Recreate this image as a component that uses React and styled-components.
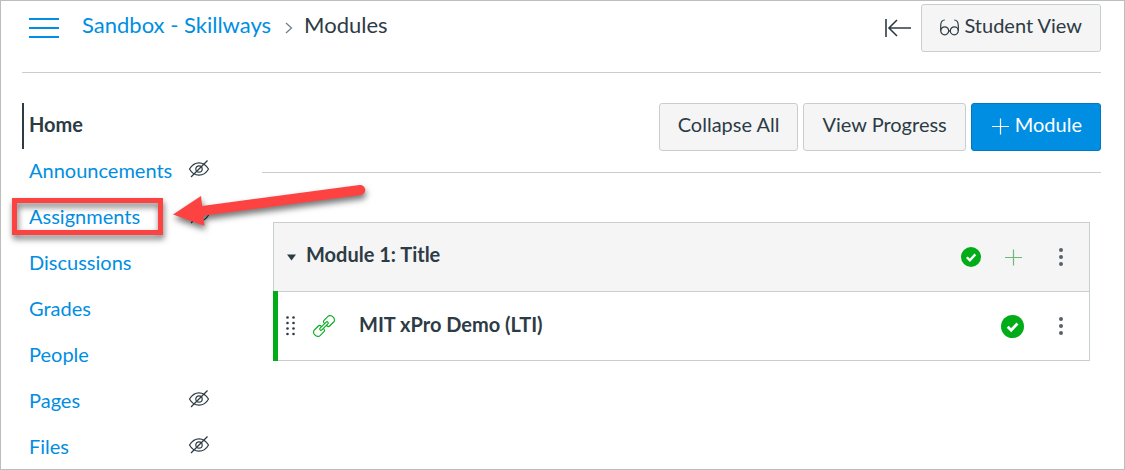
import React from "react";
import styled, { createGlobalStyle, css } from "styled-components";

const ink = "#2d3b45";
const blue = "#008ee2";
const green = "#00ac18";
const line = "#c7cdd1";
const red = "#fd4342";

const GlobalStyle = createGlobalStyle`
  *, *::before, *::after { box-sizing: border-box; }
  body {
    margin: 0;
    background: #fff;
    color: ${ink};
    font-family: Lato, "Liberation Sans", sans-serif;
    font-size: 20px;
    line-height: 24px;
  }
  a { color: ${blue}; text-decoration: none; }
  h2, h3, ul, ol { margin: 0; padding: 0; list-style: none; }
`;

const Frame = styled.div`
  min-height: 100vh;
  padding: 0 23px 0 21px;
  border: 1px solid #bdbdbd;
`;

const Header = styled.header`
  display: flex;
  align-items: flex-start;
  height: 72px;
  padding-top: 3px;
  border-bottom: 1px solid ${line};
`;

const IconButton = styled.button`
  display: flex;
  align-items: center;
  justify-content: center;
  flex: none;
  width: ${(p) => p.$width || 32}px;
  height: 48px;
  padding: 0;
  border: 0;
  background: none;
  color: ${(p) => p.$color || ink};
  cursor: pointer;
`;

const Crumbs = styled.ol`
  display: flex;
  align-items: center;
  flex: 1;
  gap: 11px;
  height: 42px;
  margin-left: 16px;
  font-size: 22px;
`;

const Crumb = styled.li`
  display: flex;
  align-items: center;
  gap: 14px;

  svg { margin-top: 5px; }
`;

const Button = styled.button`
  display: flex;
  align-items: center;
  justify-content: center;
  gap: 5px;
  height: 48px;
  padding: 0 18px 6px;
  border: 1px solid ${line};
  border-radius: 3px;
  background: #f5f5f5;
  color: ${ink};
  font: inherit;
  white-space: nowrap;
  cursor: pointer;

  svg { margin-top: 4px; }
  ${(p) =>
    p.$primary &&
    css`
      border-color: #0079c1;
      background: ${blue};
      color: #fff;
    `}
`;

const Body = styled.div`
  display: flex;
  align-items: flex-start;
  padding-top: 30px;
`;

const Nav = styled.nav`
  flex: none;
  width: 192px;
  margin: 0 48px -4px 0;
`;

const NavItem = styled.li`
  position: relative;
  display: flex;
  align-items: center;
  justify-content: space-between;
  height: 46px;
  padding-right: 4px;
  border-left: 2px solid ${(p) => (p.$active ? ink : "transparent")};

  a {
    padding: 0 5px 4px;
    ${(p) =>
      p.$active &&
      css`
        color: ${ink};
        font-weight: 700;
      `}
  }
  > svg { margin-bottom: 6px; }
`;

const Highlight = styled.span`
  position: absolute;
  top: 3px;
  left: -12px;
  width: 151px;
  height: 37px;
  border: 5px solid ${red};
  filter: drop-shadow(1px 4px 3px rgba(0, 0, 0, 0.55));
  pointer-events: none;
`;

const Arrow = styled.svg`
  position: absolute;
  top: -20px;
  left: 136px;
  overflow: visible;
  filter: drop-shadow(1px 4px 3px rgba(0, 0, 0, 0.55));
  pointer-events: none;
`;

const Main = styled.main`
  flex: 1;
  min-width: 0;
`;

const Toolbar = styled.div`
  display: flex;
  justify-content: flex-end;
  gap: 5px;
  padding-bottom: 21px;
  border-bottom: 1px solid ${line};
`;

const Module = styled.section`
  margin: 49px 11px 0;
  border: 1px solid ${line};
`;

const ModuleHeader = styled.div`
  display: flex;
  align-items: center;
  height: 69px;
  padding: 0 12px 0 11px;
  border-bottom: 1px solid ${line};
  background: #f5f5f5;
`;

const ModuleTitle = styled.h2`
  flex: 1;
  padding: 0 0 6px 9px;
  font-size: 20px;
  font-weight: 700;
`;

const ModuleItem = styled.div`
  display: flex;
  align-items: center;
  height: 70px;
  margin: -1px 0 -1px -1px;
  padding: 0 12px 0 8px;
  border-left: 5px solid ${green};
`;

const ItemTitle = styled.h3`
  flex: 1;
  padding: 0 0 4px 24px;
  font-size: 20px;
  font-weight: 700;
`;

const ItemType = styled.span`
  display: flex;
  padding-left: 17px;
`;

const Actions = styled.div`
  display: flex;
  align-items: center;
  gap: 16px;
`;

const HiddenEye = () => (
  <svg width="22" height="20" viewBox="0 0 22 20" fill="none" stroke={ink} strokeWidth="1.2" role="img" aria-label="Hidden from students">
    <path d="M1.5 10C4 6 7 3.8 11 3.8S18 6 20.5 10C18 14.5 15 16.2 11 16.2S4 14.5 1.5 10Z" />
    <circle cx="11" cy="10" r="3.2" />
    <path d="M3 18 19.5 1.5" />
  </svg>
);

const Published = ({ size }) => (
  <svg width={size} height={size} viewBox="0 0 24 24" aria-hidden="true">
    <circle cx="12" cy="12" r="12" fill={green} />
    <path d="m7 12.3 3.6 3.6 6.6-7" fill="none" stroke="#fff" strokeWidth="2.9" />
  </svg>
);

const Kebab = () => (
  <svg width="6" height="20" viewBox="0 0 6 20" fill="#56626b" aria-hidden="true">
    <circle cx="3" cy="3" r="2" />
    <circle cx="3" cy="10" r="2" />
    <circle cx="3" cy="17" r="2" />
  </svg>
);

const Plus = ({ color }) => (
  <svg width="20" height="17" viewBox="0 0 20 17" stroke={color} strokeWidth="1.2" aria-hidden="true">
    <path d="M10.500 0.500v16M2 8.500h17" />
  </svg>
);

const Glasses = () => (
  <svg width="19" height="17" viewBox="0 0 19 17" fill="none" stroke={ink} strokeWidth="1.2" aria-hidden="true">
    <circle cx="4.700" cy="11.800" r="4" />
    <circle cx="14.300" cy="11.800" r="4" />
    <path d="M.7 11.800V6.500C.8 3 2 1 4.800 1M18.300 11.800V6.500C18.200 3 17 1 14.200 1M8.600 12.300q.9-.7 1.800 0" />
  </svg>
);

const LinkIcon = () => (
  <svg width="22" height="22" viewBox="-11 -11 22 22" fill="none" stroke={green} strokeWidth="1.1" aria-hidden="true">
    <g transform="rotate(-45)" strokeLinejoin="round">
      <path d="M-2.200-1.500V-2.200a1.800 1.800 0 0 0-1.800-1.800h-6a2 2 0 0 0-1.300.6l-1 1.200a2 2 0 0 0-.4 1.200v2a2 2 0 0 0 .4 1.200l1 1.200a2 2 0 0 0 1.300.6h6a1.800 1.800 0 0 0 1.800-1.800V1.500" />
      <path d="M2.200-1.500V-2.200a1.800 1.800 0 0 1 1.800-1.800h6a2 2 0 0 1 1.300.6l1 1.200a2 2 0 0 1 .4 1.200v2a2 2 0 0 1-.4 1.200l-1 1.200a2 2 0 0 1-1.300.6h-6a1.800 1.800 0 0 1-1.800-1.800V1.500" />
      <rect x="-5.500" y="-1.200" width="11" height="2.400" rx="1.200" />
    </g>
  </svg>
);

const links = [
  { label: "Home", active: true },
  { label: "Announcements", hidden: true },
  { label: "Assignments", hidden: true, marked: true },
  { label: "Discussions" },
  { label: "Grades" },
  { label: "People" },
  { label: "Pages", hidden: true },
  { label: "Files", hidden: true },
];

export default function App() {
  return (
    <Frame>
      <GlobalStyle />
      <Header>
        <IconButton $width={44} $color={blue} aria-label="Toggle course navigation">
          <svg width="30" height="20" viewBox="0 0 30 20" stroke="currentColor" strokeWidth="2">
            <path d="M0 1h30M0 10h30M0 19h30" />
          </svg>
        </IconButton>
        <Crumbs>
          <Crumb>
            <a href="#course">Sandbox - Skillways</a>
            <svg width="8" height="12" viewBox="0 0 8 12" fill="none" stroke="#73818c" strokeWidth="1.3" aria-hidden="true">
              <path d="m1 1 5.500 5L1 11" />
            </svg>
          </Crumb>
          <Crumb>Modules</Crumb>
        </Crumbs>
        <IconButton $width={46} aria-label="Collapse sidebar">
          <svg width="26" height="20" viewBox="0 0 26 20" fill="none" stroke="currentColor" strokeWidth="1.6">
            <path d="M1 1v18M4 10h22M12 2 4 10l8 8" />
          </svg>
        </IconButton>
        <Button>
          <Glasses />
          Student View
        </Button>
      </Header>
      <Body>
        <Nav aria-label="Course">
          <ul>
            {links.map((l) => (
              <NavItem key={l.label} $active={l.active}>
                <a href={"#" + l.label.toLowerCase()}>{l.label}</a>
                {l.hidden && <HiddenEye />}
                {l.marked && (
                  <>
                    <Highlight />
                    <Arrow width="210" height="60" viewBox="160 175 210 60" aria-hidden="true">
                      <path d="M173 214.500 201 196l1.200 10L359.500 185a5 5 0 0 1 1.500 9.900L203.300 215.700l1.200 10Z" fill={red} />
                    </Arrow>
                  </>
                )}
              </NavItem>
            ))}
          </ul>
        </Nav>
        <Main>
          <Toolbar>
            <Button>Collapse All</Button>
            <Button>View Progress</Button>
            <Button $primary>
              <Plus color="#fff" />
              Module
            </Button>
          </Toolbar>
          <Module>
            <ModuleHeader>
              <IconButton $width={12} aria-label="Collapse module">
                <svg width="9" height="7" viewBox="0 0 9 7" fill="currentColor">
                  <path d="M0 .5h9l-4.500 6Z" />
                </svg>
              </IconButton>
              <ModuleTitle>Module 1: Title</ModuleTitle>
              <Actions>
                <IconButton $width={20} aria-label="Module published"><Published size={20} /></IconButton>
                <IconButton $width={32} aria-label="Add item"><Plus color="#6fb87c" /></IconButton>
                <IconButton $width={32} aria-label="Module options"><Kebab /></IconButton>
              </Actions>
            </ModuleHeader>
            <ModuleItem>
              <IconButton $width={10} aria-label="Drag to reorder">
                <svg width="10" height="20" viewBox="0 0 10 20" fill="currentColor">
                  {[1.5, 7, 12.5, 18].map((y) => (
                    <React.Fragment key={y}>
                      <circle cx="1.5" cy={y} r="1.3" />
                      <circle cx="7.5" cy={y} r="1.3" />
                    </React.Fragment>
                  ))}
                </svg>
              </IconButton>
              <ItemType><LinkIcon /></ItemType>
              <ItemTitle>MIT xPro Demo (LTI)</ItemTitle>
              <Actions>
                <IconButton $width={34} aria-label="Item published"><Published size={23} /></IconButton>
                <IconButton $width={32} aria-label="Item options"><Kebab /></IconButton>
              </Actions>
            </ModuleItem>
          </Module>
        </Main>
      </Body>
    </Frame>
  );
}
